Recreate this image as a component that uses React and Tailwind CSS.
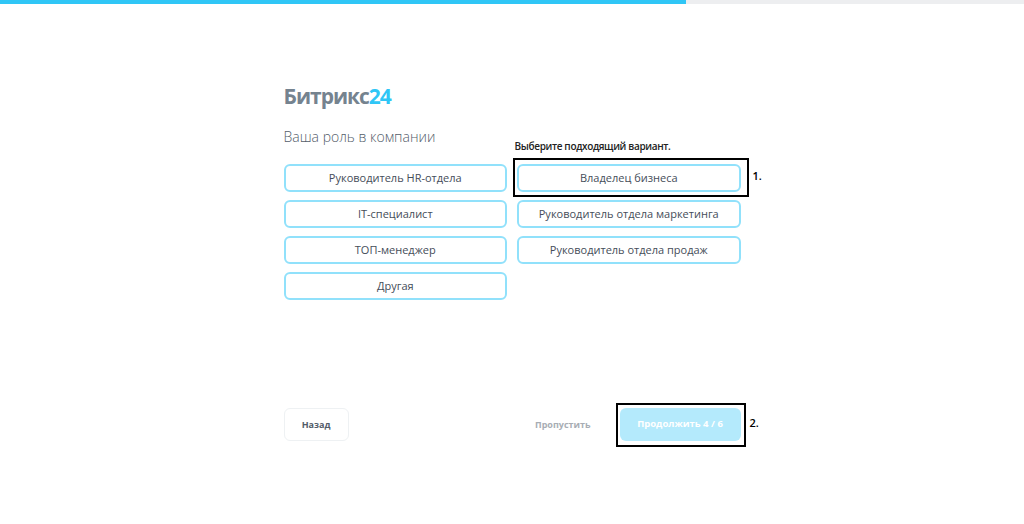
import React, { useState } from "react";

const roles = [
  "Руководитель HR-отдела",
  "Владелец бизнеса",
  "IT-специалист",
  "Руководитель отдела маркетинга",
  "ТОП-менеджер",
  "Руководитель отдела продаж",
  "Другая",
];

export default function App() {
  const [role, setRole] = useState(null);

  return (
    <div
      className="h-[524px] w-full bg-white flex flex-col"
      style={{ fontFamily: '"Open Sans", "Noto Sans", sans-serif' }}
    >
      {/* progress */}
      <div className="flex h-1 w-full bg-[#edeef0]">
        <div className="h-1 w-[686px] bg-[#2fc6f6]"></div>
      </div>

      <div className="w-[457px] mx-auto flex flex-col">
        {/* logo */}
        <div className="mt-[77px] text-[21px] font-bold leading-[30px] tracking-[-1px] text-[#75838f]">
          Битрикс<span className="text-[#2fc6f6]">24</span>
        </div>

        {/* title */}
        <div className="mt-[16px] text-[14px] font-light leading-5 text-[#535c69]">
          Ваша роль в компании
        </div>

        {/* roles */}
        <div className="relative mt-[17px] grid grid-cols-2 gap-x-[10px] gap-y-[8px]">
          <div className="absolute left-[231px] -top-[24px] text-[10px] font-semibold leading-3 tracking-[-0.35px] text-[#222]">
            Выберите подходящий вариант.
          </div>
          {roles.map((r, i) => (
            <button
              key={r}
              onClick={() => setRole(r)}
              className={`relative h-[28px] rounded-[6px] border-2 text-[11px] text-[#454d59] ${
                role === r ? "border-[#2fc6f6] bg-[#eefaff]" : "border-[#91e1fb] bg-white"
              }`}
            >
              {r}
              {i === 1 && (
                <span className="absolute -left-[6px] -right-[10px] -top-[8px] -bottom-[7px] border-2 border-black pointer-events-none">
                  <span className="absolute left-full top-[8px] ml-[6px] text-[11px] font-semibold leading-4 text-black">
                    1.
                  </span>
                </span>
              )}
            </button>
          ))}
        </div>

        {/* footer */}
        <div className="mt-[108px] flex items-center justify-between">
          <button className="h-[33px] w-[65px] rounded-[6px] border border-[#eef1f3] bg-white text-[9px] font-bold text-[#525c69]">
            Назад
          </button>
          <div className="flex items-center">
            <button className="text-[9px] font-bold text-[#a8adb4] mr-[29px]">
              Пропустить
            </button>
            <button className="relative h-[33px] w-[121px] rounded-[6px] bg-[#b4eafc] text-[9.5px] font-bold text-white">
              Продолжить 4 / 6
              <span className="absolute -left-[4px] -right-[5px] -top-[5px] -bottom-[6px] border-2 border-black pointer-events-none">
                <span className="absolute left-full top-[10px] ml-[6px] text-[11px] font-semibold leading-4 text-black">
                  2.
                </span>
              </span>
            </button>
          </div>
        </div>
      </div>
    </div>
  );
}
